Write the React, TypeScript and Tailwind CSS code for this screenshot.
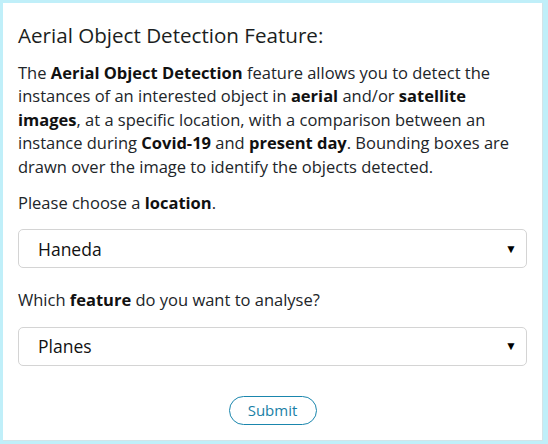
import React from "react";

function SelectBox({ value }: { value: string }) {
  return (
    <div className="flex h-[39px] w-full items-center justify-between rounded-[5px] border border-[#d4d4d4] bg-white pl-[19px] pr-[9px] text-[17.5px] text-[#111]">
      <span>{value}</span>
      <span className="text-[12px] leading-none text-black">▼</span>
    </div>
  );
}

export default function App() {
  return (
    <div
      className="h-[444px] w-[548px] overflow-hidden bg-[#c0eff9] pl-[3px] pt-[3px]"
      style={{ fontFamily: '"Open Sans", "Noto Sans", sans-serif' }}
    >
      <div className="flex h-[438px] w-[540px] flex-col border-b border-r border-[#d3e3e8] bg-white px-[15px] pt-[20px] text-[#212529]">
        <h1 className="text-[20.6px] font-medium leading-[24px] text-[#1b1e21]">Aerial Object Detection Feature:</h1>
        <p className="mt-[14px] text-[16.5px] leading-[23.4px]">
          The <b className="text-[#111]">Aerial Object Detection</b> feature allows you to detect the instances of an
          interested object in <b className="text-[#111]">aerial</b> and/or{" "}
          <b className="text-[#111]">satellite images</b>, at a specific location, with a comparison between an
          instance during <b className="text-[#111]">Covid-19</b> and <b className="text-[#111]">present day</b>.
          Bounding boxes are drawn over the image to identify the objects detected.
        </p>
        <p className="mt-[13px] text-[16.5px] leading-[23.4px]">
          Please choose a <b className="text-[#111]">location</b>.
        </p>
        <div className="mt-[15px]">
          <SelectBox value="Haneda" />
        </div>
        <p className="mt-[20px] text-[16.5px] leading-[23.4px]">
          Which <b className="text-[#111]">feature</b> do you want to analyse?
        </p>
        <div className="mt-[15px]">
          <SelectBox value="Planes" />
        </div>
        <div className="mt-[30px] flex justify-center">
          <button className="h-[29px] w-[88px] rounded-full border border-[#1a86ad] text-[15px] leading-none text-[#1a7fa6]">
            Submit
          </button>
        </div>
      </div>
    </div>
  );
}
